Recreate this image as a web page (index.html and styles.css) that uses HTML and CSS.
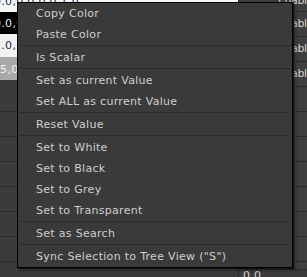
FILE: index.html
```html
<!DOCTYPE html>
<html>
<head>
<meta charset="utf-8">
<link rel="stylesheet" href="styles.css">
</head>
<body>
<div class="panel">
  <div class="col-left">
    <div class="sw sw-top"><span class="sw-text">0.0,0.0,0.0,1.0</span></div>
    <div class="sw sw-black"><span class="sw-text">0.0,0.0,0.0,1.0</span></div>
    <div class="sw sw-white"><span class="sw-text">1.0,1.0,1.0,1.0</span></div>
    <div class="sw sw-gray"><span class="sw-text shift">0.5,0.5,0.5,1.0</span></div>
    <div class="cell cell-tall"></div>
    <div class="cell"></div>
    <div class="cell"></div>
    <div class="cell"></div>
    <div class="cell"></div>
    <div class="cell"></div>
    <div class="cell"></div>
  </div>
  <div class="col-right">
    <div class="rrow rrow-top"><span class="rtext">Enable</span></div>
    <div class="rrow">Enable</div>
    <div class="rrow">Enable</div>
    <div class="rrow">Enable</div>
    <div class="rrow"></div>
    <div class="rrow"></div>
    <div class="rrow"></div>
    <div class="rrow"></div>
    <div class="rrow"></div>
    <div class="rrow"></div>
    <div class="rrow"></div>
    <div class="rrow rrow-gap"></div>
    <div class="rrow-value">0.0</div>
  </div>
</div>

<div class="menu">
  <div class="item">Copy Color</div>
  <div class="item">Paste Color</div>
  <div class="sep"></div>
  <div class="item">Is Scalar</div>
  <div class="sep"></div>
  <div class="item">Set as current Value</div>
  <div class="item">Set ALL as current Value</div>
  <div class="sep"></div>
  <div class="item">Reset Value</div>
  <div class="sep"></div>
  <div class="item">Set to White</div>
  <div class="item">Set to Black</div>
  <div class="item">Set to Grey</div>
  <div class="item">Set to Transparent</div>
  <div class="sep"></div>
  <div class="item">Set as Search</div>
  <div class="sep"></div>
  <div class="item">Sync Selection to Tree View ("S")</div>
</div>
</body>
</html>
```
FILE: styles.css
```css
html, body {
  margin: 0;
  padding: 0;
}
body {
  width: 307px;
  height: 277px;
  overflow: hidden;
  position: relative;
  background: #3a3a3a;
  font-family: "DejaVu Sans", Verdana, sans-serif;
  font-size: 11px;
  letter-spacing: 0.3px;
  color: #cccccc;
}
.panel {
  display: flex;
  height: 277px;
}
.col-left {
  width: 238px;
  flex: none;
  display: flex;
  flex-direction: column;
}
.sw {
  overflow: hidden;
  white-space: nowrap;
  flex: none;
}
.sw-text {
  display: block;
  margin-left: -6px;
}
.sw-text.shift {
  margin-left: -11px;
}
.sw-top {
  height: 12px;
  background: #f6f6f6;
  color: #1c2a44;
}
.sw-top .sw-text {
  line-height: 20px;
  margin-top: -8px;
}
.sw-black {
  height: 22px;
  line-height: 24px;
  background: #000;
  color: #dfe8ff;
}
.sw-white {
  height: 23px;
  line-height: 23px;
  background: #f2f2f2;
  color: #1c2a44;
}
.sw-gray {
  height: 23px;
  line-height: 25px;
  background: #a9a9a9;
  color: #f4f4f4;
}
.cell {
  height: 24px;
  flex: none;
  border-bottom: 1px solid #2a2a2a;
  background: #3b3b3b;
}
.cell-tall {
  height: 31px;
}
.col-right {
  flex: 1;
  border-left: 1px solid #2a2a2a;
  display: flex;
  flex-direction: column;
}
.rrow {
  height: 24px;
  line-height: 24px;
  flex: none;
  border-bottom: 1px solid #2a2a2a;
  background: #3e3e3e;
  padding-left: 39px;
  letter-spacing: -0.4px;
  white-space: nowrap;
  overflow: hidden;
  color: #d2d2d2;
}
.rrow-top {
  height: 11px;
  line-height: 20px;
}
.rtext {
  display: block;
  margin-top: -9px;
}
.rrow-gap {
  height: 7px;
}
.rrow-value {
  padding-left: 4px;
  line-height: 12px;
  background: #3b3b3b;
  color: #d2d2d2;
  flex: 1;
}
.menu {
  position: absolute;
  left: 17px;
  top: 2px;
  width: 274px;
  background: #3a3a3a;
  border: 1px solid #000;
  box-shadow: 1px 1px 0 #121212, 3px 3px 2px rgba(0, 0, 0, 0.25);
}
.item {
  height: 21px;
  line-height: 21px;
  padding-left: 18px;
  color: #cfcfcf;
  white-space: nowrap;
}
.sep {
  height: 1px;
  margin: 0 2px;
  border-top: 1px solid #2a2a2a;
}
```
